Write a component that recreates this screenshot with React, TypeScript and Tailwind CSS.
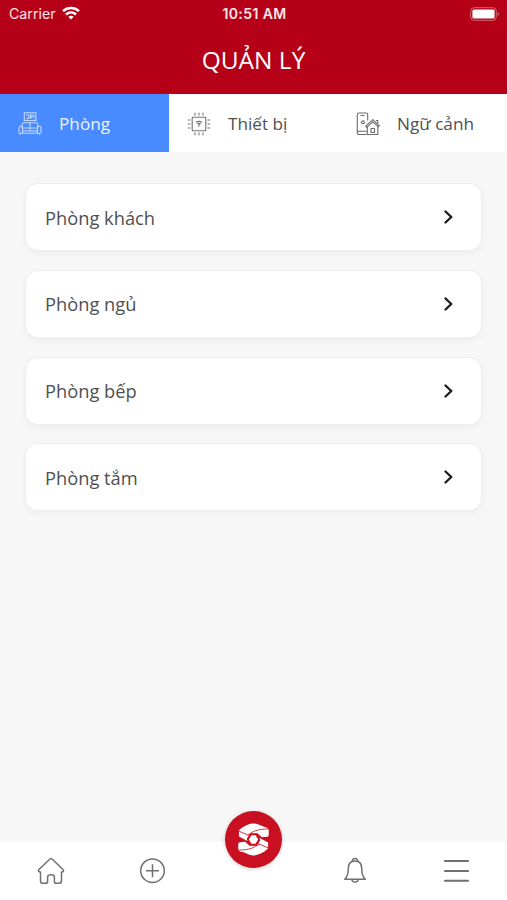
import type { ReactNode } from 'react';

type Tab = {
  label: string;
  icon: ReactNode;
  active?: boolean;
};

const rooms = ['Phòng khách', 'Phòng ngủ', 'Phòng bếp', 'Phòng tắm'];

function WifiIcon() {
  return (
    <svg viewBox="0 0 18 14" className="-mt-0.5 h-[14px] w-[18px]" fill="none" stroke="white" strokeWidth="2.5">
      <path d="M1 5.1C5.5.9 12.5.9 17 5.1" />
      <path d="M4 8.5C6.9 5.8 11.1 5.8 14 8.5" />
      <path d="M6.3 10.7C8 9.3 10 9.3 11.7 10.7L9 13.4Z" fill="white" stroke="none" />
    </svg>
  );
}

function BatteryIcon() {
  return (
    <svg viewBox="0 0 30 14" className="-mt-px h-[14px] w-[30px]" fill="none">
      <rect x="0.7" y="0.7" width="25.6" height="12.6" rx="3.5" stroke="white" strokeOpacity="0.4" />
      <rect x="2.4" y="2.4" width="22.2" height="9.2" rx="1.5" fill="white" />
      <path d="M27.7 5v4c1.6-.7 1.6-3.3 0-4Z" fill="white" fillOpacity="0.5" />
    </svg>
  );
}

function SofaIcon() {
  return (
    <svg viewBox="0 0 24 24" className="size-6 opacity-75" fill="none" stroke="currentColor" strokeWidth="1.1">
      <rect x="6.3" y="0.8" width="11.6" height="7.7" />
      <path d="M8.3 3h2.5v3.5H8.3M12.5 6.500V3l3.300.3v3M12.500 6l2-1.500" />
      <path d="M4.2 15.500v-3c0-1.200.7-1.800 1.800-1.800h12c1.100 0 1.800.6 1.800 1.800v3" />
      <path d="M12 10.700v8.300M4.500 16h15M4.500 19h15" />
      <path d="M1 15.800c0-2 3.500-2 3.500 0v5.400H1.800c-.5 0-.8-.3-.8-.8v-4.600ZM23 15.800c0-2-3.500-2-3.500 0v5.400h2.700c.5 0 .8-.3.8-.8v-4.600ZM4.500 21.200h15M2.500 21.200v1.500M21.500 21.200v1.500" />
    </svg>
  );
}

function ChipIcon() {
  return (
    <svg viewBox="0 0 24 24" className="size-6 opacity-80" fill="none" stroke="currentColor" strokeWidth="1.1">
      <rect x="5.2" y="5.2" width="13.6" height="13.6" rx="0.8" />
      <path d="M8 .8v2.700M12 .8v2.700M16 .8v2.700M8 20.500v2.700M12 20.500v2.700M16 20.500v2.700M.8 8h2.700M.8 12h2.700M.8 16h2.700M20.500 8h2.700M20.500 12h2.700M20.500 16h2.700" />
      <path d="M8.900 10.300c1.900-1.200 4.300-1.200 6.200 0M10.200 11.900c1.100-.7 2.500-.7 3.600 0M12 12v2.800" />
    </svg>
  );
}

function SmartHomeIcon() {
  return (
    <svg viewBox="0 0 24 24" className="size-6 opacity-85" fill="none" stroke="currentColor" strokeWidth="1.1" strokeLinejoin="round">
      <path d="M10.5 22.5H3c-1 0-1.700-.7-1.700-1.700V2.700C1.300 1.700 2 1 3 1h7c1 0 1.700.7 1.700 1.700V8.500M1.300 19.200h9.200M4.500 3.500h4" />
      <path d="m9.700 14.200 7.100-6.600 6.500 6.100-1 1.200-5.500-5.100-6.100 5.600-1-1.200Z" />
      <path d="M11.300 15v7.500h10.500V15M15 20.500v-4h3.500v4ZM20 8.500h1.800v3" />
      <circle cx="7" cy="10.200" r="1.400" />
      <path d="M4.700 10.200h.6" />
    </svg>
  );
}

function HomeIcon() {
  return (
    <svg viewBox="0 0 28 28" className="size-7" fill="none" stroke="currentColor" strokeWidth="1.5" strokeLinejoin="round">
      <path d="M13.200 1.800c.5-.5 1.100-.5 1.600 0l11.200 10.700c1.200 1.200.5 2.500-1.300 2.500h-.2v8.700c0 1.700-.9 2.600-2.600 2.600h-2.600c-1.200 0-1.900-.7-1.900-1.900v-4.500c0-1.600-.7-2.200-3.400-2.200s-3.400.6-3.400 2.200v4.500c0 1.200-.7 1.900-1.900 1.900H6.100c-1.700 0-2.600-.9-2.600-2.600V15h-.2c-1.800 0-2.500-1.300-1.300-2.500Z" />
    </svg>
  );
}

function PlusCircleIcon() {
  return (
    <svg viewBox="0 0 28 28" className="size-7 translate-x-px" fill="none" stroke="currentColor" strokeWidth="1.5">
      <circle cx="13.5" cy="13.7" r="11.8" />
      <path d="M13.5 7.2v13M7 13.7h13" />
    </svg>
  );
}

function BellIcon() {
  return (
    <svg viewBox="0 0 28 28" className="size-7" fill="none" stroke="currentColor" strokeWidth="1.5" strokeLinejoin="round">
      <path d="M11.300 4.500c-.4-4 5.800-4 5.400 0" />
      <path d="M14 4c4.300 0 6.700 3 6.700 7.300 0 5.500.5 8.200 3.600 10.900H3.700c3.100-2.700 3.600-5.400 3.600-10.900C7.300 7 9.700 4 14 4Z" />
      <path d="M10.800 22.500c.5 3.500 5.900 3.500 6.400 0" />
    </svg>
  );
}

function MenuIcon() {
  return (
    <svg viewBox="0 0 28 28" className="size-7" fill="none" stroke="currentColor" strokeWidth="2.1">
      <path d="M3 4h23M3 14h23M3 23.700h23" strokeLinecap="round" />
    </svg>
  );
}

function LogoIcon() {
  const half =
    'M42 60C43 55 66 39 84 38C100 37 108 46 120 48C128 49 132 53 132 59V70C132 75 130 78 126 78L111 79L98 67H76L66 84L69 91L42 77Z';
  const seams = 'M42 61L71 73M69 72C84 62 98 54 131 54';

  return (
    <svg viewBox="0 0 172 172" className="size-full">
      {[0, 180].map((angle) => (
        <g key={angle} transform={`rotate(${angle} 86 86)`}>
          <path d={half} fill="white" />
          <path d={seams} fill="none" stroke="#c91022" strokeWidth="2.5" />
        </g>
      ))}
      <path
        d="M78 71H94L103 86L94 101H78L69 86Z"
        fill="white"
        stroke="#c91022"
        strokeWidth="5"
        strokeLinejoin="round"
      />
    </svg>
  );
}

const tabs: Tab[] = [
  { label: 'Phòng', icon: <SofaIcon />, active: true },
  { label: 'Thiết bị', icon: <ChipIcon /> },
  { label: 'Ngữ cảnh', icon: <SmartHomeIcon /> },
];

export default function App() {
  return (
    <div className="flex h-[900px] w-full flex-col overflow-hidden bg-[#f7f7f7] font-['Open_Sans','Noto_Sans',sans-serif] text-[#4a4a4a]">
      <header className="h-[94px] shrink-0 bg-[#b50018] text-white">
        <div className="grid h-7 grid-cols-3 items-center pr-[7px] pl-[9px] font-['Inter',sans-serif]">
          <div className="flex items-center gap-1.5">
            <span className="text-[14.2px] text-white/90">Carrier</span>
            <WifiIcon />
          </div>
          <span className="-mt-0.5 text-center text-[14px] font-semibold tracking-[0.4px] whitespace-nowrap text-white/90">
            10:51 AM
          </span>
          <div className="flex justify-end">
            <BatteryIcon />
          </div>
        </div>
        <h1 className="pt-3.5 text-center text-[24.5px] leading-9">QUẢN LÝ</h1>
      </header>

      <nav className="grid h-[58px] shrink-0 grid-cols-3 bg-white">
        {tabs.map((tab) => (
          <button
            key={tab.label}
            type="button"
            className={`flex items-center gap-[17px] pt-0.5 pl-[18px] text-[17.2px] whitespace-nowrap ${
              tab.active ? 'bg-[#488aff] text-white/90' : 'text-[#505050]'
            }`}
          >
            {tab.icon}
            {tab.label}
          </button>
        ))}
      </nav>

      <main className="flex flex-1 flex-col gap-[20.7px] px-[26px] pt-[32.3px]">
        {rooms.map((room) => (
          <button
            key={room}
            type="button"
            className="flex h-[66px] items-center justify-between rounded-xl bg-white pr-[26px] pl-[19px] text-[18.3px] text-[#505050] shadow-[0_0_0_1px_#eeeeee,0_3px_8px_rgba(0,0,0,0.05)]"
          >
            {room}
            <svg viewBox="0 0 12 16" className="h-4 w-3" fill="none" stroke="#1c1c1c" strokeWidth="2.4">
              <path d="M2.500 2.500 8.300 8l-5.800 5.500" strokeLinecap="round" strokeLinejoin="round" />
            </svg>
          </button>
        ))}
      </main>

      <footer className="grid h-[58px] shrink-0 grid-cols-5 justify-items-center bg-white text-[#707070]">
        <button type="button">
          <HomeIcon />
        </button>
        <button type="button">
          <PlusCircleIcon />
        </button>
        <button
          type="button"
          className="relative -top-[31px] size-[57px] rounded-full bg-[#c91022] shadow-[0_1px_4px_rgba(0,0,0,0.2)]"
        >
          <LogoIcon />
        </button>
        <button type="button">
          <BellIcon />
        </button>
        <button type="button">
          <MenuIcon />
        </button>
      </footer>
    </div>
  );
}
